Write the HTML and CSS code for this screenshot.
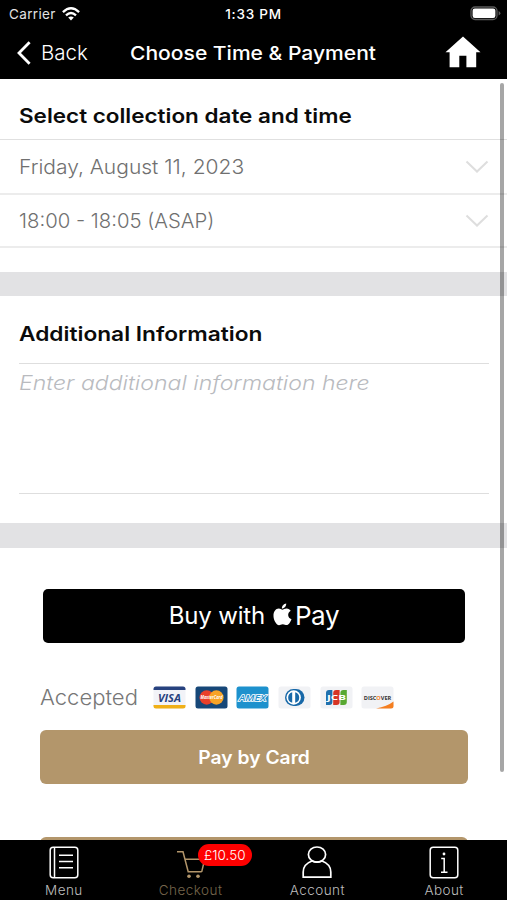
FILE: index.html
```html
<!DOCTYPE html>
<html lang="en">
<head>
<meta charset="utf-8">
<title>Choose Time &amp; Payment</title>
<link rel="stylesheet" href="styles.css">
</head>
<body>
<div class="screen">
  <header class="header">
    <div class="status">
      <div class="carrier"><span>Carrier</span>
        <svg class="wifi" width="18" height="14" viewBox="0 0 18 14" fill="none" stroke="#fff" stroke-width="2.3"><path d="M.9 5.1Q9-2.6 17.1 5.1M4 8.4Q9 3.6 14 8.4"/><path d="M9 13.5 6.2 10.6Q9 8.3 11.8 10.6Z" fill="#fff" stroke="none"/></svg>
      </div>
      <div class="clock">1:33 PM</div>
      <svg class="battery" width="31" height="15" viewBox="0 0 31 15"><rect x="1" y="1" width="26" height="12.5" rx="4" fill="none" stroke="#5b5b5b" stroke-width="1.3"/><rect x="2.6" y="2.6" width="22.8" height="9.3" rx="2.2" fill="#fff"/><path d="M28.6 5v4.6q1.8-.8 1.8-2.3T28.6 5Z" fill="#5b5b5b"/></svg>
    </div>
    <nav class="nav">
      <div class="back"><svg width="14" height="24" viewBox="0 0 14 24" fill="none" stroke="#fff" stroke-width="2.8"><path d="M12.6 1.2 2 12l10.6 10.8"/></svg><span>Back</span></div>
      <h1 class="title">Choose Time &amp; Payment</h1>
      <svg class="home" width="36" height="32" viewBox="0 0 36 32"><path d="M18 .5.5 16.2H4.600V31.200H14.300V19.800H21.400V31.200H31.200V16.200H35.500Z" fill="#fff"/></svg>
    </nav>
  </header>

  <main class="content">
    <section class="collection">
      <h2 class="heading heading-select"><span class="wide">Select collection date and time</span></h2>
      <div class="row"><span class="wide">Friday, August 11, 2023</span><svg class="chevron" width="24" height="14" viewBox="0 0 24 14"><path d="M1.500 1.500 12 11.500 22.500 1.500"/></svg></div>
      <div class="row"><span class="wide">18:00 - 18:05 (ASAP)</span><svg class="chevron" width="24" height="14" viewBox="0 0 24 14"><path d="M1.500 1.500 12 11.500 22.500 1.500"/></svg></div>
    </section>
    <section class="additional">
      <h2 class="heading heading-info"><span class="wide">Additional Information</span></h2>
      <div class="note"><span class="wide">Enter additional information here</span></div>
    </section>
    <section class="payment">
      <div class="apple-pay">
        <span class="buy">Buy with</span>
        <svg class="apple" width="19" height="23" viewBox="0 0 19 23" fill="#fff"><path d="M13.200.4C13.400 3 11.300 5.500 8.900 5.400 8.700 2.900 10.900.6 13.200.4ZM9.400 6.700C10.400 6.700 11.600 5.500 13.600 5.500 15.500 5.600 16.900 6.500 17.700 7.800 14 10 14.500 14.900 18.500 16.300 17.500 19.100 15.600 22 13.700 22.100 12.300 22.100 11.500 21.200 9.800 21.200 8.100 21.200 7.300 22.100 6 22.200 3.700 22.200.6 17.500.5 13.200.3 8.700 2.700 5.700 5.800 5.600 7.400 5.600 8.600 6.700 9.400 6.700Z"/></svg>
        <span class="pay">Pay</span>
      </div>
      <div class="accepted">
        <span class="accepted-label wide">Accepted</span>
        <div class="cards">
          <svg width="33" height="23" viewBox="0 0 33 23"><rect x=".5" y=".5" width="32" height="22" rx="2.500" fill="#f2f3f8"/><path d="M.5 4V3Q.5.500 3 .5H30Q32.500.500 32.500 3V4Z" fill="#27427f"/><path d="M.5 19V20Q.5 22.500 3 22.500H30Q32.500 22.500 32.500 20V19Z" fill="#f0b017"/><text x="16.500" y="15.500" class="logo visa" textLength="23" lengthAdjust="spacingAndGlyphs">VISA</text></svg>
          <svg width="33" height="23" viewBox="0 0 33 23"><rect x=".5" y=".5" width="32" height="22" rx="2.500" fill="#164778"/><circle cx="11.700" cy="11.500" r="7.200" fill="#e93f2a"/><circle cx="21.400" cy="11.500" r="7.200" fill="#f8a326"/><text x="16.500" y="13.400" class="logo master" textLength="22" lengthAdjust="spacingAndGlyphs">MasterCard</text></svg>
          <svg width="33" height="23" viewBox="0 0 33 23"><rect x=".5" y=".5" width="32" height="22" rx="2.500" fill="#1d91cd"/><text x="16.500" y="15" class="logo amex" textLength="27" lengthAdjust="spacingAndGlyphs">AMEX</text></svg>
          <svg width="33" height="23" viewBox="0 0 33 23"><rect x=".5" y=".5" width="32" height="22" rx="2.500" fill="#f1f2f5"/><path d="M15.500 3h2.500a8.500 8.500 0 0 1 0 17h-2.500a8.500 8.500 0 0 1 0-17Z" fill="#1768a8"/><circle cx="15.700" cy="11.500" r="7.200" fill="#fff"/><path d="M14.200 6.200a5.500 5.500 0 0 0 0 10.600ZM17.200 6.200a5.500 5.500 0 0 1 0 10.600Z" fill="#1768a8"/></svg>
          <svg width="33" height="23" viewBox="0 0 33 23"><rect x=".5" y=".5" width="32" height="22" rx="2.500" fill="#f1f2f5"/><path d="M6 7q0-3 3-3h3.400v12q0 3-3 3H6Z" fill="#1e70ae"/><path d="M13.200 7q0-3 3-3h3.400v12q0 3-3 3h-3.400Z" fill="#d63424"/><path d="M20.400 7q0-3 3-3h3.400v12q0 3-3 3h-3.400Z" fill="#58a832"/><text x="16.500" y="14" class="logo jcb" textLength="19" lengthAdjust="spacingAndGlyphs">JCB</text></svg>
          <svg width="33" height="23" viewBox="0 0 33 23"><rect x=".5" y=".5" width="32" height="22" rx="2.500" fill="#f1f2f5"/><path d="M15 22.500Q26 20.500 32.500 15.500V20Q32.500 22.500 30 22.500Z" fill="#f47e20"/><text x="16.500" y="13.500" class="logo discover" textLength="27.500" lengthAdjust="spacingAndGlyphs">DISC<tspan fill="#f47e20">O</tspan>VER</text></svg>
        </div>
      </div>
      <div class="card-button"><span>Pay by Card</span></div>
      <div class="card-button next-button"></div>
    </section>
    <div class="scrollbar"></div>
  </main>

  <footer class="tabs">
    <div class="tab"><svg width="30" height="33" viewBox="0 0 30 33" fill="none" stroke="#fff" stroke-width="1.500"><rect x="1.200" y="1.200" width="27.600" height="30.600" rx="3"/><path d="M5.500 1.500v30M10 9.200h14M10 15.500h14M10 21.700h14"/></svg><span>Menu</span></div>
    <div class="tab active"><svg width="30" height="33" viewBox="0 0 30 33" fill="none" stroke="#b3966b" stroke-width="1.500"><path d="M1 5.800h6l5.200 20h13.500M8.700 13.200h20L25.700 25.800"/><circle cx="13" cy="30.200" r="1.800" fill="#b3966b" stroke="none"/><circle cx="22" cy="30.200" r="1.800" fill="#b3966b" stroke="none"/></svg><span class="badge">£10.50</span><span>Checkout</span></div>
    <div class="tab"><svg width="30" height="33" viewBox="0 0 30 33" fill="none" stroke="#fff" stroke-width="1.700"><ellipse cx="15" cy="8.600" rx="8.600" ry="7.600"/><path d="M10 15C4.500 17 1.200 20.500 1.200 26v5.200h27.600V26C28.800 20.500 25.500 17 20 15Q15 17.400 10 15"/></svg><span>Account</span></div>
    <div class="tab"><svg width="30" height="33" viewBox="0 0 30 33" fill="none" stroke="#fff" stroke-width="1.500"><rect x="1.200" y="1.200" width="27.600" height="30.600" rx="3"/><path d="M12.200 12.500h3v13.700M12 26.200h6.500"/><circle cx="15" cy="8" r="1.400" fill="#fff" stroke="none"/></svg><span>About</span></div>
  </footer>
</div>
</body>
</html>
```
FILE: styles.css
```css
* { box-sizing: border-box; }
body { margin: 0; background: #fff; font-family: Inter, "Open Sans", sans-serif; }
svg { display: block; flex: none; overflow: visible; }
h1, h2 { margin: 0; }
span, h1, h2, .clock { white-space: nowrap; }
.wide { display: inline-block; transform-origin: left center; }
.screen { width: 507px; height: 900px; display: flex; flex-direction: column; overflow: hidden; }

.header { height: 79px; flex: none; background: #000; color: #fff; }
.status { height: 28px; display: grid; grid-template-columns: 1fr auto 1fr; align-items: center; padding: 0 6px; font-size: 13.500px; }
.carrier { display: flex; align-items: center; gap: 6px; margin: -1px 0 0 3px; color: #e2e2e2; letter-spacing: .35px; }
.clock { margin-top: -1px; font-weight: 500; letter-spacing: .75px; }
.battery { justify-self: end; margin-top: -1px; }
.nav { height: 49px; display: grid; grid-template-columns: 1fr auto 1fr; align-items: center; padding: 0 17px; }
.back { display: flex; align-items: center; gap: 10px; font-size: 20.500px; font-weight: 300; }
.title { margin-top: 2px; font-size: 19px; font-weight: 500; transform: scaleX(1.108); }
.home { justify-self: end; margin: -2px 9px 0 0; }

.content { position: relative; height: 761px; flex: none; overflow: hidden; }
.heading { padding: 0 19px; font-size: 20px; font-weight: 600; line-height: 24px; color: #0b0b0b; }
.collection { height: 217px; padding-top: 25px; border-bottom: 24px solid #e2e2e4; }
.heading-select { height: 35px; }
.heading-select .wide { transform: scaleX(1.123); }
.row { height: 54px; border-top: 1px solid #e0e0e0; display: flex; justify-content: space-between; align-items: center; padding: 0 18px 0 19px; font-size: 20px; font-weight: 300; color: #707070; }
.row .wide { transform: scaleX(1.05); }
.row:last-child { height: 55px; border: solid #ececec; border-width: 2px 0; }
.row:last-child .wide { transform: scaleX(1.015); }
.chevron path { fill: none; stroke: #dedede; stroke-width: 2; }
.additional { height: 252px; padding-top: 26px; border-bottom: 25px solid #e2e2e4; }
.heading-info { height: 41px; }
.heading-info .wide { transform: scaleX(1.135); }
.note { height: 131px; margin: 0 18px 0 19px; border: solid #dedede; border-width: 1px 0; padding-top: 7px; line-height: 24px; font-size: 20px; font-weight: 300; font-style: italic; color: #b9bbbf; }
.note .wide { transform: scaleX(1.153); }
.payment { padding: 41px 39px 0 40px; }
.apple-pay { height: 54px; margin: 0 3px; padding-bottom: 1px; border-radius: 5px; background: #000; color: #fff; display: flex; justify-content: center; align-items: center; font-size: 24px; letter-spacing: -.2px; }
.apple { margin: -2px 3px 0 8px; }
.pay { font-size: 26px; letter-spacing: -.4px; }
.accepted { height: 87px; padding-top: 22px; display: flex; align-items: center; gap: 15px; color: #777; }
.accepted-label { width: 98px; font-size: 21px; font-weight: 300; transform: scaleX(1.05); }
.cards { display: flex; gap: 8.700px; }
.logo { text-anchor: middle; font-family: "Open Sans", sans-serif; font-weight: 700; font-style: italic; }
.visa { font-size: 11px; fill: #27427f; }
.master { font-size: 5.500px; fill: #fff; }
.amex { font-size: 9.500px; font-weight: 600; fill: #1d91cd; stroke: #fff; stroke-width: 1.500px; paint-order: stroke; }
.jcb { font-size: 7.500px; font-style: normal; fill: #fff; }
.discover { font-size: 6px; font-style: normal; fill: #333; }
.card-button { height: 54px; border-radius: 6px; background: #b3966b; color: #fff; display: flex; justify-content: center; align-items: center; font-size: 18px; font-weight: 600; }
.card-button span { transform: scaleX(1.07); }
.next-button { margin-top: 53px; }
.scrollbar { position: absolute; right: 3px; top: 4px; width: 4px; height: 689px; border-radius: 2px; background: rgba(0, 0, 0, .35); }

.tabs { height: 60px; flex: none; display: grid; grid-template-columns: repeat(4, 1fr); background: #000; }
.tab { position: relative; display: flex; flex-direction: column; align-items: center; padding: 6px 0 0 1px; gap: 3px; color: #bdbdbd; font-size: 13.500px; font-weight: 300; line-height: 17px; letter-spacing: .45px; }
.active { color: #76664c; }
.badge { position: absolute; left: 71px; top: 4px; width: 54px; height: 22px; border-radius: 11px; background: #f00; color: #fff; line-height: 22px; text-align: center; letter-spacing: 0; }
```
